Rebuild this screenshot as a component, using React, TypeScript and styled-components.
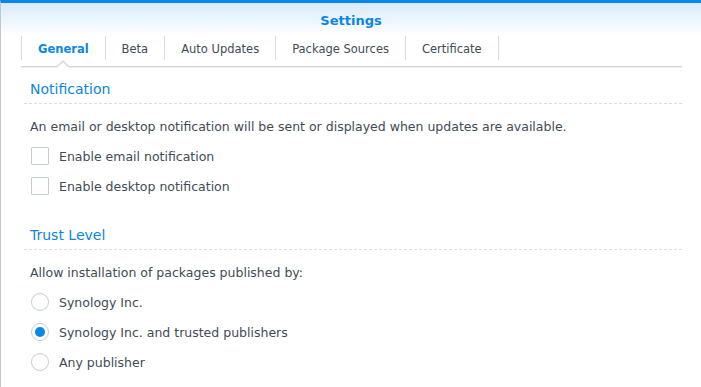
import * as React from 'react';
import styled, { createGlobalStyle } from 'styled-components';

const GlobalStyle = createGlobalStyle`
    html, body {
        margin: 0;
        padding: 0;
        background: #ffffff;
    }
    body {
        font-family: 'DejaVu Sans', Verdana, sans-serif;
        font-size: 12.5px;
        color: #414b55;
    }
`;

const Window = styled.div`
    width: 701px;
    height: 387px;
    box-sizing: border-box;
    border-top: 3px solid #0a86e6;
    border-left: 1px solid #c3c7cc;
    background: #ffffff;
    overflow: hidden;
`;

// 상단 타이틀 영역
const TitleBar = styled.div`
    height: 32px;
    display: flex;
    align-items: center;
    justify-content: center;
    background: linear-gradient(to bottom, #d8eafa, #ffffff);
`;

const Title = styled.div`
    font-size: 13px;
    font-weight: bold;
    color: #0a86e6;
    padding-top: 2px;
`;

// 탭 줄
const TabStrip = styled.div`
    position: relative;
    display: flex;
    height: 30px;
    margin: 1px 19px 0 20px;
    border-bottom: 1px solid #d4d7da;
    box-shadow: 0 1px 0 #eceeef;
`;

const Tab = styled.div<{ $active?: boolean }>`
    position: relative;
    height: 24px;
    display: flex;
    align-items: center;
    padding: 1px 16px 0 16px;
    box-sizing: border-box;
    border-left: 1px solid #d9dde2;
    font-size: 11.5px;
    font-weight: ${(p) => (p.$active ? 'bold' : 'normal')};
    color: ${(p) => (p.$active ? '#0a86e6' : '#414b55')};
    &:last-child {
        border-right: 1px solid #d9dde2;
    }
    ${(p) =>
        p.$active &&
        `
        &::before, &::after {
            content: '';
            position: absolute;
            left: 50%;
            width: 0;
            height: 0;
            border-style: solid;
        }
        &::before {
            bottom: -7px;
            margin-left: -7px;
            border-width: 0 7px 7px 7px;
            border-color: transparent transparent #d4d7da transparent;
        }
        &::after {
            bottom: -8px;
            margin-left: -6px;
            border-width: 0 6px 6px 6px;
            border-color: transparent transparent #ffffff transparent;
        }
    `}
`;

const Content = styled.div`
    padding: 14px 19px 0 23px;
`;

const Section = styled.div`
    display: flex;
    flex-direction: column;
    margin-bottom: 32px;
`;

const SectionHeading = styled.div`
    font-size: 14px;
    color: #0a86e6;
    padding: 0 0 6px 6px;
    border-bottom: 1px dashed #d6dde4;
`;

const Description = styled.div`
    padding: 15px 0 0 6px;
    height: 16px;
    line-height: 16px;
`;

const OptionList = styled.div`
    display: flex;
    flex-direction: column;
    gap: 12px;
    padding: 12px 0 0 7px;
`;

const Option = styled.label`
    display: flex;
    align-items: center;
    gap: 10px;
    height: 18px;
`;

const CheckBox = styled.span`
    width: 16px;
    height: 16px;
    border: 1px solid #c5ccd4;
    border-radius: 1px;
    background: #ffffff;
`;

const Radio = styled.span<{ $checked?: boolean }>`
    position: relative;
    width: 16px;
    height: 16px;
    border: 1px solid #c5ccd4;
    border-radius: 50%;
    background: #ffffff;
    ${(p) =>
        p.$checked &&
        `
        &::after {
            content: '';
            position: absolute;
            top: 3px;
            left: 3px;
            width: 10px;
            height: 10px;
            border-radius: 50%;
            background: #0a86e6;
        }
    `}
`;

const tabs = ['General', 'Beta', 'Auto Updates', 'Package Sources', 'Certificate'];

const publishers = ['Synology Inc.', 'Synology Inc. and trusted publishers', 'Any publisher'];

const App: React.FC = () => (
    <>
        <GlobalStyle />
        <Window>
            <TitleBar>
                <Title>Settings</Title>
            </TitleBar>
            <TabStrip>
                {tabs.map((t, i) => (
                    <Tab key={t} $active={i === 0}>
                        {t}
                    </Tab>
                ))}
            </TabStrip>
            <Content>
                <Section>
                    <SectionHeading>Notification</SectionHeading>
                    <Description>
                        An email or desktop notification will be sent or displayed when updates are available.
                    </Description>
                    <OptionList>
                        <Option>
                            <CheckBox />
                            Enable email notification
                        </Option>
                        <Option>
                            <CheckBox />
                            Enable desktop notification
                        </Option>
                    </OptionList>
                </Section>
                <Section>
                    <SectionHeading>Trust Level</SectionHeading>
                    <Description>Allow installation of packages published by:</Description>
                    <OptionList>
                        {publishers.map((p, i) => (
                            <Option key={p}>
                                <Radio $checked={i === 1} />
                                {p}
                            </Option>
                        ))}
                    </OptionList>
                </Section>
            </Content>
        </Window>
    </>
);

export default App;
